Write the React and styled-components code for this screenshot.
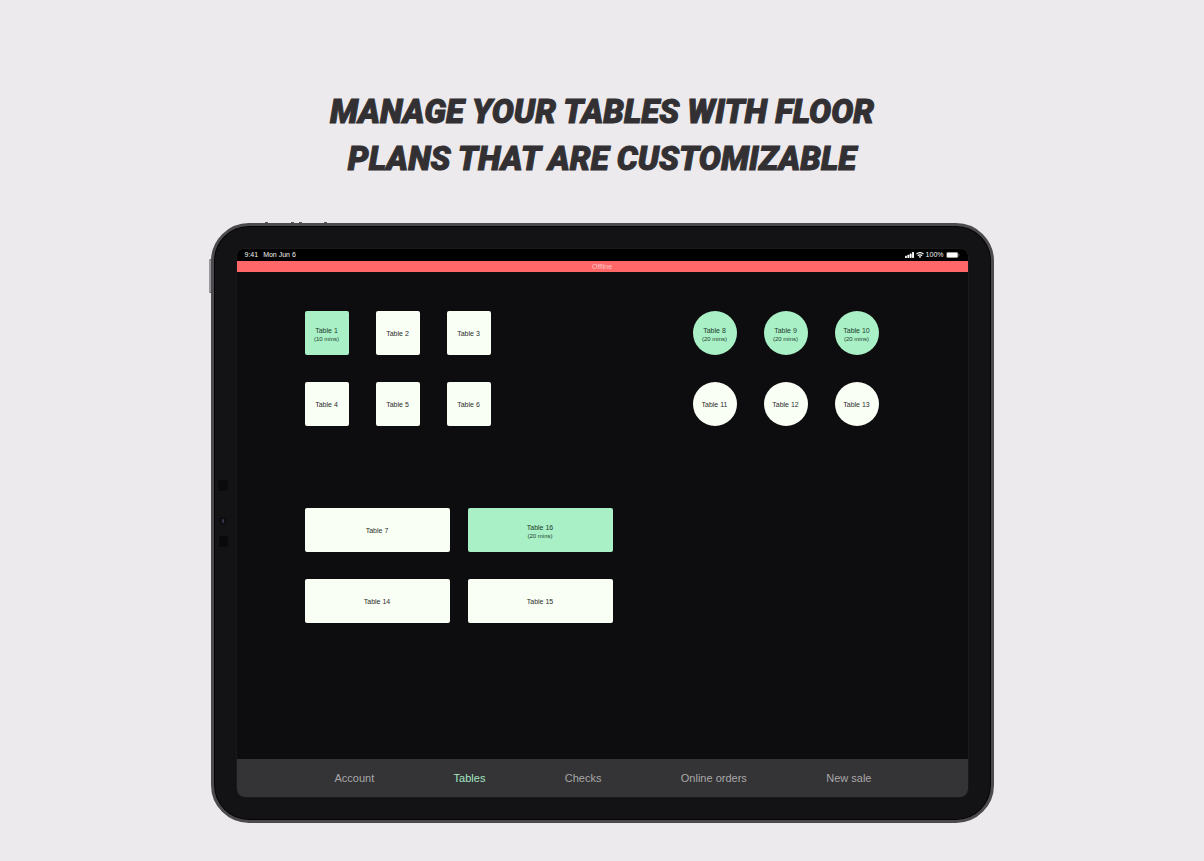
import React from 'react'
import styled, { createGlobalStyle } from 'styled-components';


const GlobalStyle = createGlobalStyle`
    * {
        box-sizing: border-box;
    }

    body {
        margin: 0;
        background: #eceaed;
        font-family: 'Liberation Sans', Arial, sans-serif;
    }
`;

const Page = styled.main`
    min-height: 100vh;
    display: flex;
    flex-direction: column;
    align-items: center;
    padding: 88px 16px 38px;
`;

const Title = styled.h1`
    max-width: 600px;
    margin: 0 0 41px;
    color: #323033;
    font-family: Roboto, sans-serif;
    font-size: 33px;
    font-style: italic;
    font-weight: 900;
    line-height: 47px;
    text-align: center;
    text-transform: uppercase;
    -webkit-text-stroke: 1px #323033;
`;

const Device = styled.section`
    position: relative;
    width: 100%;
    max-width: 783px;
    padding: 23px;
    border: 3px solid #4c4a4e;
    border-radius: 38px;
    background: #131215;
    box-shadow: inset 0 0 0 1px #050506;
`;

const PowerButton = styled.span`
    position: absolute;
    top: 33px;
    left: -5px;
    width: 2px;
    height: 34px;
    border-top: 1px solid #4c4a4e;
    border-bottom: 1px solid #4c4a4e;
    border-radius: 2px 0 0 2px;
    background: #98969b;
`;

const VolumeButton = styled.span`
    position: absolute;
    top: -4px;
    left: ${props => props.$left}px;
    width: 3px;
    height: 1px;
    background: #5a585c;
`;

const Sensors = styled.svg`
    position: absolute;
    top: 250px;
    left: 4px;
`;

const Screen = styled.div`
    display: flex;
    flex-direction: column;
    overflow: hidden;
    border-radius: 8px;
    background: #0d0c0e;
    box-shadow: 0 0 0 1px #19181b;
`;

const StatusBar = styled.header`
    display: flex;
    align-items: center;
    justify-content: space-between;
    height: 12px;
    padding: 0 8px;
    background: #000;
    color: #f2f2f2;
    font-size: 7px;
    line-height: 12px;
`;

const StatusGroup = styled.div`
    display: flex;
    align-items: center;
    gap: ${props => props.$gap}px;
`;

const Offline = styled.div`
    height: 11px;
    background: #ff6769;
    color: #ffc9c5;
    font-size: 7px;
    line-height: 11px;
    text-align: center;
`;

const Floor = styled.div`
    display: flex;
    flex-direction: column;
    gap: 82px;
    min-height: 487px;
    padding: 39px 89px 39px 68px;
`;

const FloorRow = styled.div`
    display: flex;
    flex-wrap: wrap;
    justify-content: space-between;
    gap: 27px;
`;

const TableGroup = styled.div`
    display: grid;
    grid-template-columns: repeat(${props => props.$columns}, auto);
    gap: 27px ${props => props.$gap || 27}px;
`;

const TableButton = styled.button`
    display: flex;
    flex-direction: column;
    align-items: center;
    justify-content: center;
    width: ${props => props.$shape === 'long' ? 145 : 44}px;
    height: 44px;
    padding: ${props => props.$busy ? '3px 0 0' : 0};
    border: none;
    border-radius: ${props => props.$shape === 'round' ? '50%' : '2px'};
    background: ${props => props.$busy ? '#a9f0c6' : '#fafff6'};
    color: ${props => props.$busy ? '#1d3d2c' : '#2b2e2b'};
    font-family: inherit;
    font-size: 7px;
    line-height: 9px;
    white-space: nowrap;
    cursor: pointer;
`;

const Timer = styled.span`
    font-size: 6px;
`;

const Nav = styled.nav`
    display: flex;
    align-items: center;
    justify-content: space-between;
    height: 38px;
    padding: 0 96px 0 98px;
    background: #343335;
`;

const NavLink = styled.a`
    color: ${props => props.$active ? '#a3e6c4' : '#a9a8aa'};
    font-size: 11px;
    line-height: 16px;
    text-decoration: none;
`;

const squareTables = [
    { name: 'Table 1', time: '(10 mins)' },
    { name: 'Table 2' },
    { name: 'Table 3' },
    { name: 'Table 4' },
    { name: 'Table 5' },
    { name: 'Table 6' },
];

const roundTables = [
    { name: 'Table 8', time: '(20 mins)' },
    { name: 'Table 9', time: '(20 mins)' },
    { name: 'Table 10', time: '(20 mins)' },
    { name: 'Table 11' },
    { name: 'Table 12' },
    { name: 'Table 13' },
];

const longTables = [
    { name: 'Table 7' },
    { name: 'Table 16', time: '(20 mins)' },
    { name: 'Table 14' },
    { name: 'Table 15' },
];

const links = ['Account', 'Tables', 'Checks', 'Online orders', 'New sale'];

function Tables({ tables, shape, columns, gap }) {
    return (
        <TableGroup $columns={columns} $gap={gap}>
            {tables.map(table => (
                <TableButton key={table.name} type='button' $shape={shape} $busy={!!table.time}>
                    {table.name}
                    {table.time && <Timer>{table.time}</Timer>}
                </TableButton>
            ))}
        </TableGroup>
    )
}

function SignalIcon() {
    return (
        <svg width='9' height='6' viewBox='0 0 9 6' fill='#fff' aria-hidden='true'>
            <rect x='0' y='3.8' width='1.9' height='2.2' rx='.4' />
            <rect x='2.4' y='2.8' width='1.9' height='3.2' rx='.4' />
            <rect x='4.7' y='1.5' width='1.9' height='4.5' rx='.4' />
            <rect x='7.1' y='0.1' width='1.9' height='5.9' rx='.4' />
        </svg>
    )
}

function WifiIcon() {
    return (
        <svg width='8' height='6' viewBox='0 0 8 6' fill='none' stroke='#fff' strokeWidth='1.2' aria-hidden='true'>
            <path d='M.5 2.2C2.4.2 5.6.2 7.5 2.2' />
            <path d='M1.8 3.7C3 2.5 5 2.5 6.2 3.7' />
            <path d='M4 6L2.8 4.8C3.4 4.2 4.6 4.2 5.2 4.8Z' fill='#fff' stroke='none' />
        </svg>
    )
}

function BatteryIcon() {
    return (
        <svg width='14' height='6' viewBox='0 0 14 6' aria-hidden='true'>
            <rect x='.25' y='.25' width='12' height='5.5' rx='1.6' fill='none' stroke='#8d8d8d' strokeWidth='.5' />
            <rect x='.8' y='.6' width='10.9' height='4.8' rx='1.2' fill='#fff' />
            <path d='M12.8 2.1c.8.3.8 1.5 0 1.8z' fill='#8d8d8d' />
        </svg>
    )
}

function App() {
    return (
        <Page>
            <GlobalStyle />
            <Title>Manage your tables with floor plans that are customizable</Title>

            <Device>
                <PowerButton />
                <VolumeButton $left={51} />
                <VolumeButton $left={77} />
                <VolumeButton $left={85} />
                <VolumeButton $left={110} />
                <Sensors width='12' height='90' viewBox='0 0 12 90' aria-hidden='true'>
                    <rect x='0' y='4' width='10' height='11' rx='3' fill='#0b0a0c' />
                    <circle cx='5' cy='45' r='4' fill='#0e0d12' />
                    <rect x='4' y='43' width='2' height='4' rx='1' fill='#34344e' />
                    <rect x='1' y='60' width='9' height='11' rx='3' fill='#09080a' />
                </Sensors>

                <Screen>
                    <StatusBar>
                        <StatusGroup $gap={5}>
                            <span>9:41</span>
                            <span>Mon Jun 6</span>
                        </StatusGroup>
                        <StatusGroup $gap={2}>
                            <SignalIcon />
                            <WifiIcon />
                            <span>100%</span>
                            <BatteryIcon />
                        </StatusGroup>
                    </StatusBar>
                    <Offline>Offline</Offline>

                    <Floor>
                        <FloorRow>
                            <Tables tables={squareTables} shape='square' columns={3} />
                            <Tables tables={roundTables} shape='round' columns={3} />
                        </FloorRow>
                        <FloorRow>
                            <Tables tables={longTables} shape='long' columns={2} gap={18} />
                        </FloorRow>
                    </Floor>

                    <Nav>
                        {links.map(link => (
                            <NavLink key={link} href='#' $active={link === 'Tables'}>{link}</NavLink>
                        ))}
                    </Nav>
                </Screen>
            </Device>
        </Page>
    )
}

export default App
